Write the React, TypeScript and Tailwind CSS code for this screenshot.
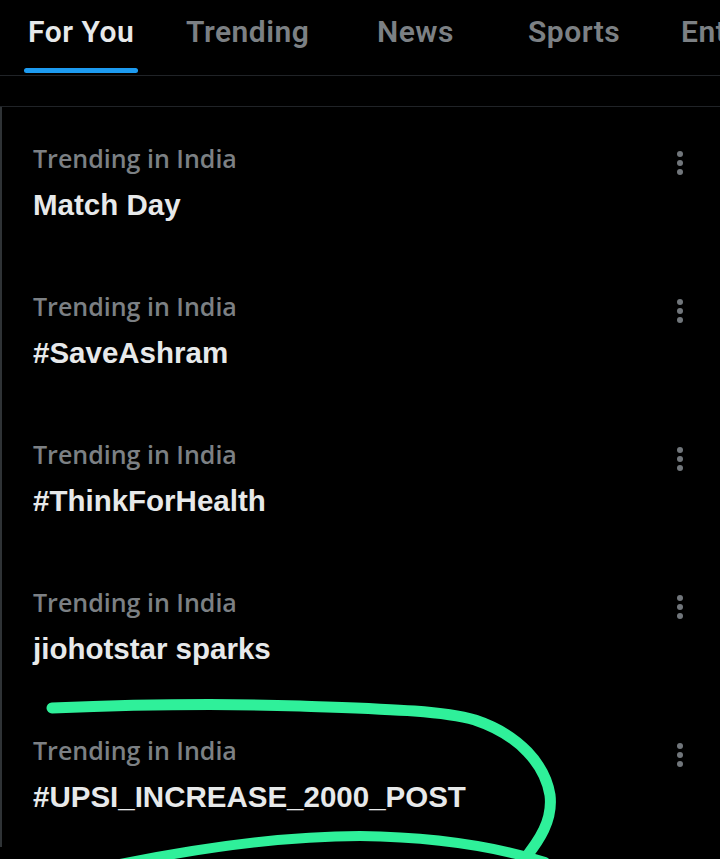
import React from "react";

const tabs = [
  { label: "For You", box: "w-[158px]" },
  { label: "Trending", box: "w-[191px]" },
  { label: "News", box: "w-[151px]" },
  { label: "Sports", box: "w-[153px]" },
  { label: "Entertainment", box: "w-[200px]" },
];

const trends = [
  "Match Day",
  "#SaveAshram",
  "#ThinkForHealth",
  "jiohotstar sparks",
  "#UPSI_INCREASE_2000_POST",
];

function MoreIcon() {
  return (
    <svg width="8" height="26" viewBox="0 0 8 26" className="shrink-0">
      <circle cx="4" cy="4" r="3" fill="#71767b" />
      <circle cx="4" cy="13" r="3" fill="#71767b" />
      <circle cx="4" cy="22" r="3" fill="#71767b" />
    </svg>
  );
}

const TrendRow = ({ title }: { title: string }) => (
  <div className="flex h-[148px] items-start justify-between pl-[31px] pr-[36px] pt-[35px]">
    <div className="flex flex-col gap-[13px]">
      <span
        className="text-[25px] font-semibold leading-[32px] text-[#7c8084]"
        style={{ fontFamily: "'Open Sans', 'Liberation Sans', sans-serif" }}
      >
        Trending in India
      </span>
      <span
        className="text-[29.5px] font-bold leading-[35px] text-[#e7e9ea]"
        style={{ fontFamily: "'Liberation Sans', Arial, sans-serif" }}
      >
        {title}
      </span>
    </div>
    <div className="pt-[8px]">
      <MoreIcon />
    </div>
  </div>
);

export default function App() {
  return (
    <div
      className="relative h-[859px] w-[720px] overflow-hidden bg-black"
      style={{ fontFamily: "Roboto, 'Liberation Sans', sans-serif" }}
    >
      <div className="flex h-[76px] items-start whitespace-nowrap border-b border-[#202327] pl-[24px]">
        {tabs.map((t, i) => (
          <div key={t.label} className={`shrink-0 ${t.box}`}>
            <div className="inline-flex flex-col">
              <span
                className={`px-[4px] pt-[13px] text-[30px] leading-[38px] font-semibold tracking-[0.5px] ${
                  i === 0 ? "text-[#e7e9ea]" : "text-[#7c8084]"
                }`}
              >
                {t.label}
              </span>
              {i === 0 && (
                <div className="mt-[17px] h-[5px] w-full rounded-full bg-[#1d9bf0]" />
              )}
            </div>
          </div>
        ))}
      </div>
      <div className="h-[31px] border-b border-[#202327]" />
      <div className="border-l-2 border-[#2f3336]">
        {trends.map((t) => (
          <TrendRow key={t} title={t} />
        ))}
      </div>
      <svg
        className="pointer-events-none absolute left-0 top-0"
        width="720"
        height="859"
        viewBox="0 0 720 859"
        fill="none"
      >
        <path
          d="M52 708 C 150 704, 240 704, 300 706 C 380 709, 440 710, 475 720 C 520 735, 545 765, 550 795 C 553 820, 540 840, 522 862"
          stroke="#2ff09a"
          strokeWidth="11"
          strokeLinecap="round"
        />
        <path
          d="M120 864 C 200 848, 280 836, 360 836 C 440 837, 500 848, 545 862"
          stroke="#2ff09a"
          strokeWidth="10"
          strokeLinecap="round"
        />
      </svg>
    </div>
  );
}
